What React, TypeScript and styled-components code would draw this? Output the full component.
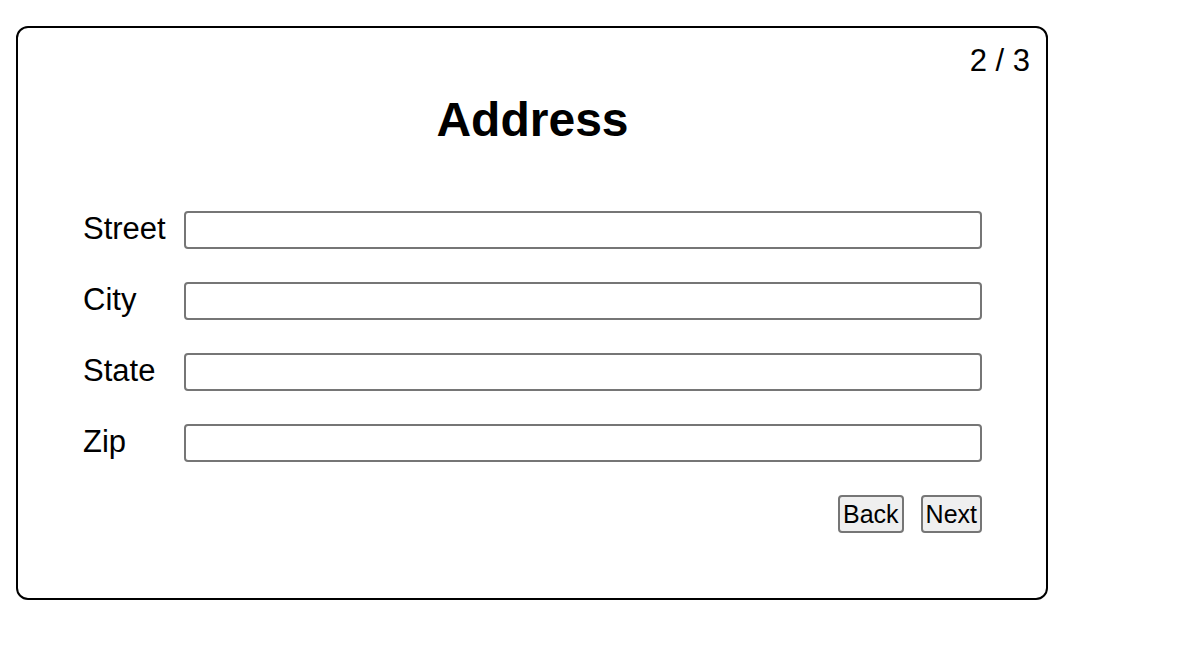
import React from "react";
import styled, { createGlobalStyle } from "styled-components";

const GlobalStyle = createGlobalStyle`
  html, body {
    margin: 0;
    padding: 0;
    background: #ffffff;
    font-family: "Liberation Sans", Arial, sans-serif;
    color: #000000;
  }
`;

const Page = styled.div`
  padding: 26px 0 0 16px;
`;

const Card = styled.div`
  position: relative;
  box-sizing: border-box;
  width: 1032px;
  padding: 64px 64px 65px 65px;
  border: 2px solid #000000;
  border-radius: 12px;
  background: #ffffff;
`;

const StepCounter = styled.div`
  position: absolute;
  top: 15px;
  right: 16px;
  font-size: 31px;
  line-height: normal;
`;

const Title = styled.h1`
  margin: 0;
  text-align: center;
  font-size: 48px;
  font-weight: bold;
  line-height: normal;
`;

const Form = styled.form`
  display: flex;
  flex-direction: column;
  gap: 33px;
  margin-top: 64px;
`;

const Row = styled.div`
  display: flex;
  align-items: flex-start;
`;

const Label = styled.label`
  width: 101px;
  flex-shrink: 0;
  font-size: 31px;
  line-height: normal;
`;

const Input = styled.input`
  box-sizing: border-box;
  flex: 1;
  height: 38px;
  margin: 0;
  padding: 0 4px;
  border: 2px solid #767676;
  border-radius: 4px;
  background: #ffffff;
  font-family: inherit;
  font-size: 20px;
  outline: none;
`;

const Actions = styled.div`
  display: flex;
  justify-content: flex-end;
  gap: 17px;
`;

const Button = styled.button`
  box-sizing: border-box;
  height: 38px;
  margin: 0;
  padding: 0 3px;
  border: 2px solid #767676;
  border-radius: 4px;
  background: #efefef;
  color: #000000;
  font-family: inherit;
  font-size: 25px;
  line-height: 1;
  cursor: pointer;
`;

const fields = ["Street", "City", "State", "Zip"];

const App: React.FC = () => {
  return (
    <Page>
      <GlobalStyle />
      <Card>
        <StepCounter>2 / 3</StepCounter>
        <Title>Address</Title>
        <Form onSubmit={(e) => e.preventDefault()}>
          {fields.map((field) => (
            <Row key={field}>
              <Label htmlFor={field.toLowerCase()}>{field}</Label>
              <Input id={field.toLowerCase()} type="text" />
            </Row>
          ))}
          <Actions>
            <Button type="button">Back</Button>
            <Button type="submit">Next</Button>
          </Actions>
        </Form>
      </Card>
    </Page>
  );
};

export default App;
